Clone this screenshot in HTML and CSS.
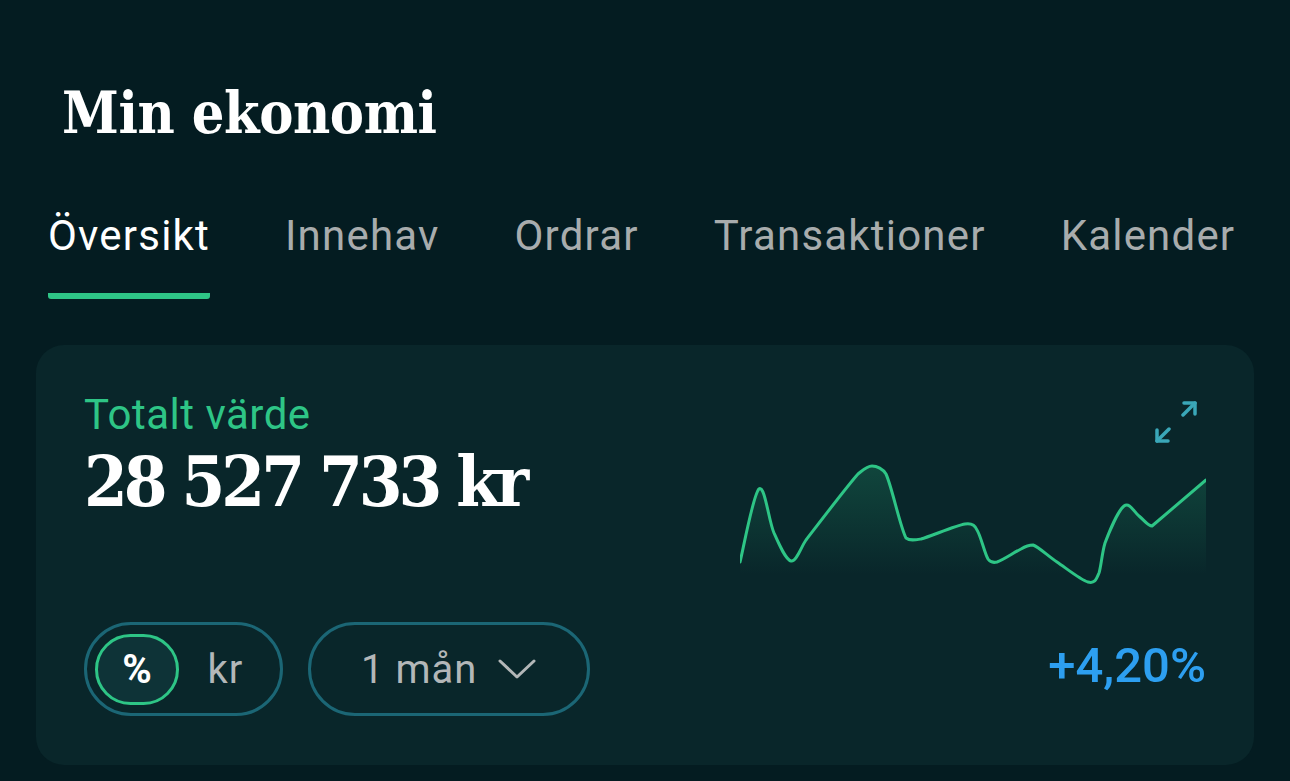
FILE: index.html
```html
<!DOCTYPE html>
<html lang="sv">
<head>
    <meta charset="UTF-8">
    <meta name="viewport" content="width=device-width, initial-scale=1.0">
    <title>Min ekonomi</title>
    <link rel="stylesheet" href="styles.css">
</head>
<body>
    <h1 class="page-title">Min ekonomi</h1>

    <nav class="tabs">
        <a class="tab active">Översikt</a>
        <a class="tab">Innehav</a>
        <a class="tab">Ordrar</a>
        <a class="tab">Transaktioner</a>
        <a class="tab">Kalender</a>
    </nav>

    <section class="card">
        <div class="card-top">
            <div class="summary">
                <div class="summary-label">Totalt värde</div>
                <div class="summary-value">28 527 733 kr</div>
            </div>
            <div class="chart-box">
                <svg class="expand-icon" width="42" height="42" viewBox="0 0 42 42" fill="none" stroke="#3aa7b8" stroke-width="3.5" stroke-linecap="round" stroke-linejoin="round">
                    <path d="M28 14 L40 2"/>
                    <path d="M29 2 H40 V13"/>
                    <path d="M14 28 L2 40"/>
                    <path d="M2 29 V40 H13"/>
                </svg>
                <svg class="chart" width="466" height="130" viewBox="740 460 466 130">
                    <defs>
                        <linearGradient id="area" x1="0" y1="466" x2="0" y2="575" gradientUnits="userSpaceOnUse">
                            <stop offset="0" stop-color="#2ec586" stop-opacity="0.2"/>
                            <stop offset="1" stop-color="#2ec586" stop-opacity="0"/>
                        </linearGradient>
                    </defs>
                    <path fill="url(#area)" d="M740 562 C743.2 549.8 753.3 493.8 759 489 C764.7 484.2 768.7 521 774 533 C779.3 545 785.7 559.8 791 561 C796.3 562.2 801 547 806 540 C817.2 525.5 847 486.3 858 474 C863 470 867 466 872 466 C877 466 883 469 886 474 C891.7 486 900.2 527.2 906 538 C910 541 915 540 921 539 C930.8 536.3 955.7 525.5 965 524 C971 523 975 525 977 530 C980.8 535.8 984.7 553.7 988 559 C990 562 993 563 997 562 C1002.5 560.3 1015 551.8 1021 549 C1026 546 1030 545 1033 545 C1039 547.2 1047.8 555.8 1057 562 C1066.2 568.2 1081 580.2 1088 582 C1095 583.8 1096.2 579.5 1099 573 C1101 567 1102 553 1105 543 C1109.2 531.8 1118.3 510.5 1124 506 C1129.7 501.5 1134.3 512.7 1139 516 C1144 520 1148 526 1152 526 L1206 480 L1206 590 L740 590 Z"/>
                    <path fill="none" stroke="#2ec586" stroke-width="3" stroke-linecap="round" stroke-linejoin="round" d="M740 562 C743.2 549.8 753.3 493.8 759 489 C764.7 484.2 768.7 521 774 533 C779.3 545 785.7 559.8 791 561 C796.3 562.2 801 547 806 540 C817.2 525.5 847 486.3 858 474 C863 470 867 466 872 466 C877 466 883 469 886 474 C891.7 486 900.2 527.2 906 538 C910 541 915 540 921 539 C930.8 536.3 955.7 525.5 965 524 C971 523 975 525 977 530 C980.8 535.8 984.7 553.7 988 559 C990 562 993 563 997 562 C1002.5 560.3 1015 551.8 1021 549 C1026 546 1030 545 1033 545 C1039 547.2 1047.8 555.8 1057 562 C1066.2 568.2 1081 580.2 1088 582 C1095 583.8 1096.2 579.5 1099 573 C1101 567 1102 553 1105 543 C1109.2 531.8 1118.3 510.5 1124 506 C1129.7 501.5 1134.3 512.7 1139 516 C1144 520 1148 526 1152 526 L1206 480"/>
                </svg>
            </div>
        </div>

        <div class="card-bottom">
            <div class="controls">
                <div class="unit-toggle">
                    <span class="unit-option selected">%</span>
                    <span class="unit-option">kr</span>
                </div>
                <button class="period-select">
                    <span>1 mån</span>
                    <svg width="38" height="20" viewBox="0 0 38 20" fill="none" stroke="#b3b7b8" stroke-width="3" stroke-linecap="round" stroke-linejoin="round">
                        <path d="M2 2 L19 18 L36 2"/>
                    </svg>
                </button>
            </div>
            <div class="change">+4,20%</div>
        </div>
    </section>
</body>
</html>
```

FILE: styles.css
```css
body {
    margin: 0;
    background-color: #041c21;
    font-family: Roboto, "Noto Sans", sans-serif;
    color: #fff;
}

.page-title {
    margin: 79px 0 0 62px;
    font-family: "DejaVu Serif", serif;
    font-stretch: condensed;
    font-weight: bold;
    font-size: 57px;
    line-height: 68px;
    letter-spacing: -0.4px;
}

.tabs {
    display: flex;
    gap: 75px;
    margin-top: 65px;
    padding-left: 48px;
}

.tab {
    font-size: 42px;
    line-height: 48px;
    letter-spacing: 1.2px;
    color: #a8acad;
    padding-bottom: 33px;
    border-bottom: 6px solid transparent;
}

.tab.active {
    color: #fff;
    border-bottom-color: #2ec586;
    border-radius: 0 0 3px 3px;
}

.card {
    display: flex;
    flex-direction: column;
    justify-content: space-between;
    box-sizing: border-box;
    height: 420px;
    margin: 46px 36px 0;
    padding: 46px 48px 49px;
    background-color: #09262a;
    border-radius: 28px;
}

.card-top {
    display: flex;
    justify-content: space-between;
}

.summary-label {
    font-size: 42px;
    line-height: 48px;
    letter-spacing: 0.5px;
    color: #2ec586;
}

.summary-value {
    margin-top: 3px;
    font-family: "DejaVu Serif", serif;
    font-stretch: condensed;
    font-weight: bold;
    font-size: 70px;
    line-height: 80px;
    letter-spacing: -4px;
}

.chart-box {
    display: flex;
    flex-direction: column;
    align-items: flex-end;
    width: 466px;
}

.expand-icon {
    margin: 10px 9px 0 0;
}

.chart {
    display: block;
    margin-top: 17px;
}

.card-bottom {
    display: flex;
    justify-content: space-between;
    align-items: center;
}

.controls {
    display: flex;
    gap: 25px;
}

.unit-toggle {
    display: flex;
    align-items: center;
    box-sizing: border-box;
    width: 199px;
    height: 94px;
    padding: 0 8px;
    border: 3px solid #1b6675;
    border-radius: 47px;
}

.unit-option {
    width: 93px;
    text-align: center;
    font-size: 40px;
    letter-spacing: 1px;
    color: #b3b7b8;
}

.unit-option.selected {
    display: flex;
    align-items: center;
    justify-content: center;
    box-sizing: border-box;
    width: 84px;
    height: 71px;
    border: 3px solid #2ec586;
    border-radius: 36px;
    background-color: #0e3337;
    color: #fff;
    font-size: 40px;
    font-weight: bold;
    letter-spacing: 0;
}

.period-select {
    display: flex;
    align-items: center;
    gap: 21px;
    box-sizing: border-box;
    width: 282px;
    height: 94px;
    padding: 0 0 0 50px;
    border: 3px solid #1b6675;
    border-radius: 47px;
    background: none;
    font-family: Roboto, sans-serif;
    font-size: 40px;
    letter-spacing: 1px;
    color: #b3b7b8;
}

.change {
    margin-bottom: 8px;
    font-size: 49px;
    line-height: 1;
    font-weight: 500;
    color: #2d9ff0;
}
```
